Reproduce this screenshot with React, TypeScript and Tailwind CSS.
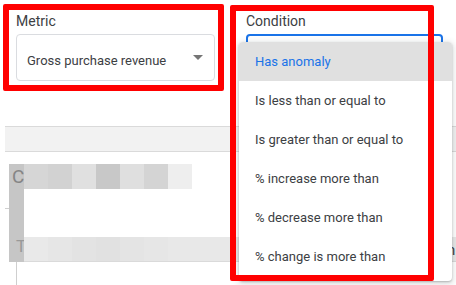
const CONDITIONS = [
  'Has anomaly',
  'Is less than or equal to',
  'Is greater than or equal to',
  '% increase more than',
  '% decrease more than',
  '% change is more than',
]

// blurred (pixelated) cells of the table behind the menu
const ROW_ONE = ['#d6d6d6', '#d2d2d2', '#e0e0e0', '#c8c8c8', '#dfdfdf', '#d4d4d4', '#eeeeee']
const ROW_TWO = ['#e9e9e9', '#e6e6e6', '#e3e3e3', '#e1e1e1', '#e4e4e4', '#e6e6e6', '#e8e8e8']

export default function App() {
  return (
    <div className="relative h-[285px] w-[456px] overflow-hidden bg-white font-['Roboto','Liberation_Sans',sans-serif] text-[#3c4043]">
      {/* form row */}
      <div className="flex gap-[31px] pl-4 pt-[11px]">
        <div className="w-[199px]">
          <div className="h-5 text-[14px] leading-5">Metric</div>
          <div className="mt-[3px] flex h-[47px] items-center justify-between rounded border border-[#dadce0] pl-[10px] pr-[11px]">
            <span className="mt-[6px] text-[13px]">Gross purchase revenue</span>
            <span className="h-0 w-0 border-x-[5px] border-t-[5px] border-x-transparent border-t-[#757575]" />
          </div>
        </div>
        <div className="w-[197px]">
          <div className="h-5 text-[14px] leading-5">Condition</div>
          <div className="mt-[3px] h-[47px] rounded border-2 border-[#1a73e8]" />
        </div>
      </div>

      {/* table behind */}
      <div className="ml-[5px] mt-[45px]">
        <div className="h-[26px] border-y border-[#dadada] bg-[#f2f2f2]" />
        <div className="mt-[12px] flex">
          <div className="ml-1 flex h-[98px] w-[15px] flex-col justify-between bg-[#c6c6c6] pb-[6px] pl-[3px] pt-[1px] text-[#858585]">
            <span className="text-[19px] leading-6">C</span>
            <span className="pl-[4px] text-[17px] leading-5 text-[#999999]">T</span>
          </div>
          <div className="flex-1">
            <div className="flex h-[25px]">
              {ROW_ONE.map((c, i) => (
                <div key={i} className="w-6" style={{ background: c }} />
              ))}
            </div>
            <div className="mt-[48px] flex h-[25px] border-b border-[#dadada] bg-[#e8e8e8]">
              {ROW_TWO.map((c, i) => (
                <div key={i} className="w-6" style={{ background: c }} />
              ))}
            </div>
          </div>
        </div>
        <div className="ml-[11px] h-[24px] w-px bg-[#cfcfcf]" />
      </div>
      <div className="absolute left-[5px] top-[208px] h-px w-1 bg-[#cfcfcf]" />
      <div className="absolute left-[447px] top-[240px] text-[15px] leading-5">n</div>

      {/* open dropdown menu */}
      <div className="absolute left-[239px] top-[42px] w-[213px] overflow-hidden rounded bg-white pb-[5px] shadow-[0_2px_6px_2px_rgba(60,64,67,0.15),0_1px_2px_rgba(60,64,67,0.3)]">
        {CONDITIONS.map((label, i) => (
          <div
            key={label}
            className={
              i === 0
                ? 'flex h-[39px] items-center bg-[#e0e0e0] pl-4 text-[13px] text-[#1a73e8]'
                : 'flex h-[39px] items-center pl-4 text-[13px]'
            }
          >
            {label}
          </div>
        ))}
      </div>

      {/* red annotation boxes */}
      <div className="absolute left-[3px] top-[4px] h-[87px] w-[221px] rounded-[2px] border-[6px] border-[#ff0000]" />
      <div className="absolute left-[230px] top-[5px] h-[276px] w-[204px] rounded-[2px] border-[6px] border-[#ff0000]" />
    </div>
  )
}
